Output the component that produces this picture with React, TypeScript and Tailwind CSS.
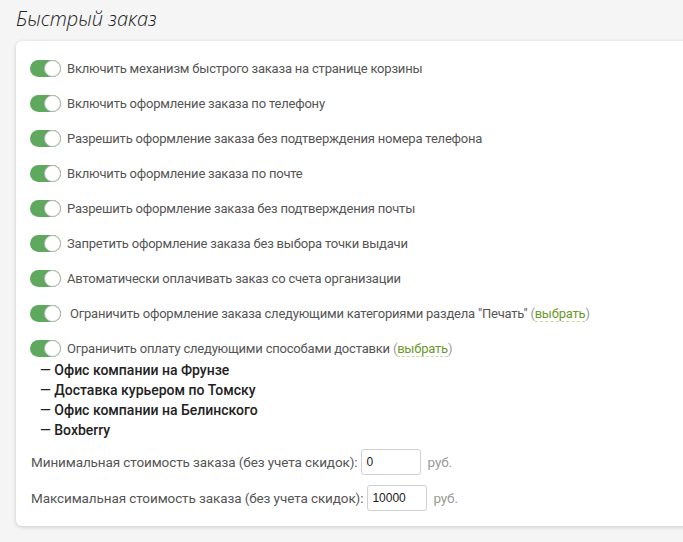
import { useState } from "react";

const options = [
  "Включить механизм быстрого заказа на странице корзины",
  "Включить оформление заказа по телефону",
  "Разрешить оформление заказа без подтверждения номера телефона",
  "Включить оформление заказа по почте",
  "Разрешить оформление заказа без подтверждения почты",
  "Запретить оформление заказа без выбора точки выдачи",
  "Автоматически оплачивать заказ со счета организации",
];

const deliveries = [
  "Офис компании на Фрунзе",
  "Доставка курьером по Томску",
  "Офис компании на Белинского",
  "Boxberry",
];

function Toggle({ on, onClick }: { on: boolean; onClick: () => void }) {
  return (
    <button
      onClick={onClick}
      className={`relative h-[17px] w-[31px] shrink-0 rounded-full ${on ? "bg-[#5fa95f]" : "bg-[#ccc]"}`}
    >
      <span
        className={`absolute top-0 h-[17px] w-[17px] rounded-full border border-[#b5b5b5] bg-white ${on ? "right-0" : "left-0"}`}
      />
    </button>
  );
}

function Choose() {
  return (
    <span className="text-[#999]">
      (
      <span className="cursor-pointer border-b border-dashed border-[#c8d8a0] text-[#6b9a2a]">выбрать</span>)
    </span>
  );
}

export default function App() {
  const [flags, setFlags] = useState<boolean[]>(Array(9).fill(true));
  const flip = (i: number) => setFlags(f => f.map((v, j) => (j === i ? !v : v)));

  return (
    <div className="min-h-[542px] bg-[#f5f5f5] pl-4 font-['Roboto',sans-serif] text-[13px] text-[#555]">
      <h1 className="pt-[6px] pb-[9px] font-['Open_Sans',sans-serif] text-[20px] font-light italic leading-[26px] text-[#222]">
        Быстрый заказ
      </h1>

      <div className="mr-[-8px] rounded-md bg-white pt-[10px] pb-[10px] pl-[14px] shadow-[0_1px_4px_rgba(0,0,0,0.18)]">
        {options.map((text, i) => (
          <div key={i} className="flex h-[35px] items-center gap-[6px]">
            <Toggle on={flags[i]} onClick={() => flip(i)} />
            <span className="tracking-[-0.2px]">{text}</span>
          </div>
        ))}

        <div className="flex h-[35px] items-center gap-[9px]">
          <Toggle on={flags[7]} onClick={() => flip(7)} />
          <span className="tracking-[-0.2px]">
            Ограничить оформление заказа следующими категориями раздела "Печать" <Choose />
          </span>
        </div>

        <div className="flex h-[35px] items-center gap-[6px]">
          <Toggle on={flags[8]} onClick={() => flip(8)} />
          <span className="tracking-[-0.2px]">
            Ограничить оплату следующими способами доставки <Choose />
          </span>
        </div>

        <ul className="-mt-[6px] pl-[10px] pb-[4px]">
          {deliveries.map(d => (
            <li key={d} className="h-[20px] text-[14px] leading-[20px] font-medium text-[#222]">
              — {d}
            </li>
          ))}
        </ul>

        <div className="flex h-[36px] items-center gap-1 pl-[1px] text-[13.5px] tracking-[-0.1px]">
          <span>Минимальная стоимость заказа (без учета скидок):</span>
          <input
            defaultValue="0"
            className="h-[26px] w-[60px] rounded-[3px] border border-[#d0d0d0] px-[4px] font-['Liberation_Sans',sans-serif] text-[12px] tracking-normal text-[#222] outline-none"
          />
          <span className="ml-[2px] text-[#999]">руб.</span>
        </div>
        <div className="flex h-[36px] items-center gap-1 pl-[1px] text-[13.5px] tracking-[-0.1px]">
          <span>Максимальная стоимость заказа (без учета скидок):</span>
          <input
            defaultValue="10000"
            className="h-[26px] w-[60px] rounded-[3px] border border-[#d0d0d0] px-[4px] font-['Liberation_Sans',sans-serif] text-[12px] tracking-normal text-[#222] outline-none"
          />
          <span className="ml-[2px] text-[#999]">руб.</span>
        </div>
      </div>
    </div>
  );
}
